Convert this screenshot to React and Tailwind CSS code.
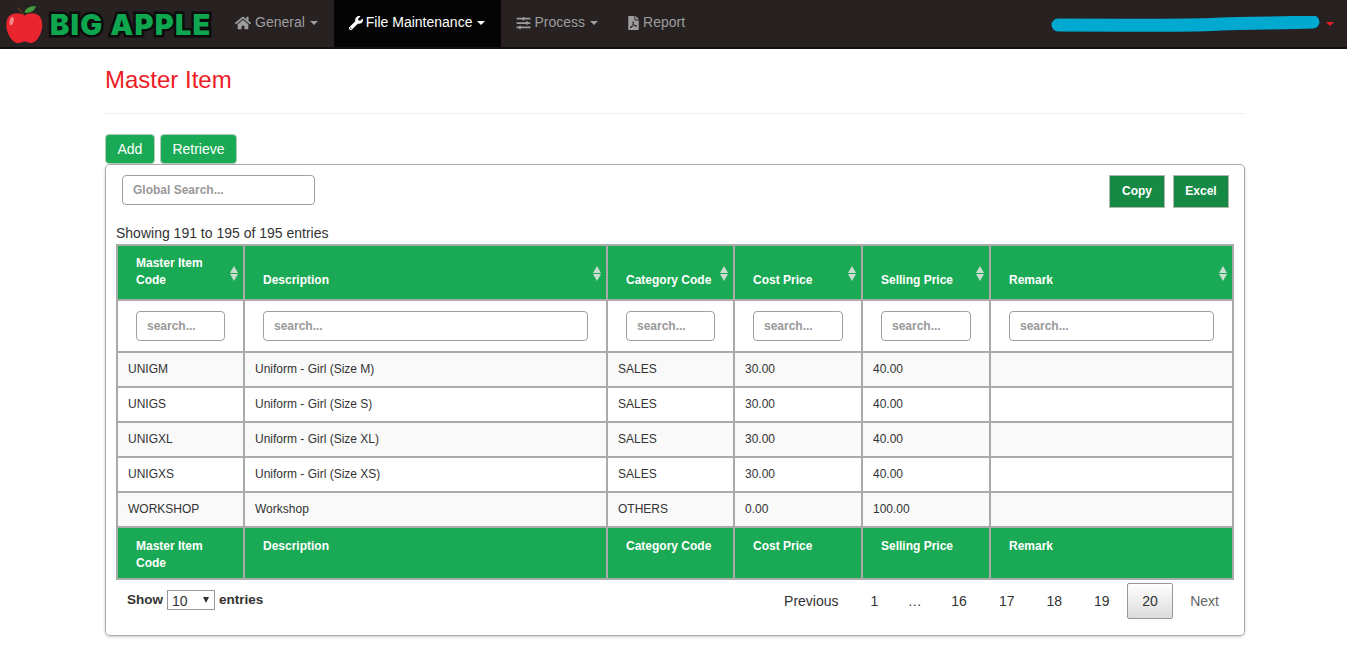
import React from 'react';
import { FaHome, FaWrench, FaSlidersH, FaFilePdf } from 'react-icons/fa';

const columns = [
  { label: 'Master Item Code', width: 'w-[127px]' },
  { label: 'Description', width: 'w-[363px]' },
  { label: 'Category Code', width: 'w-[127px]' },
  { label: 'Cost Price', width: 'w-[128px]' },
  { label: 'Selling Price', width: 'w-[128px]' },
  { label: 'Remark', width: 'w-[243px]' },
];

const rows = [
  ['UNIGM', 'Uniform - Girl (Size M)', 'SALES', '30.00', '40.00', ''],
  ['UNIGS', 'Uniform - Girl (Size S)', 'SALES', '30.00', '40.00', ''],
  ['UNIGXL', 'Uniform - Girl (Size XL)', 'SALES', '30.00', '40.00', ''],
  ['UNIGXS', 'Uniform - Girl (Size XS)', 'SALES', '30.00', '40.00', ''],
  ['WORKSHOP', 'Workshop', 'OTHERS', '0.00', '100.00', ''],
];

const Caret = ({ className = 'border-t-[#9d9d9d]' }) => (
  <span className={`ml-[5px] inline-block h-0 w-0 border-x-4 border-t-4 border-x-transparent align-middle ${className}`} />
);

const NavItem = ({ icon, label, caret, active, className = 'px-[15px]' }) => (
  <div className={`flex h-[47px] items-center pb-[2px] ${className} ${active ? 'bg-[#050505] text-white' : 'text-[#9d9d9d]'}`}>
    {icon}
    <span>{label}</span>
    {caret && <Caret className={active ? 'border-t-white' : 'border-t-[#9d9d9d]'} />}
  </div>
);

const AppleLogo = () => (
  <svg viewBox="0 0 40 42" className="h-[40px] w-[39px] shrink-0">
    <path d="M19 11 C17 8 15 6 13 4" stroke="#5b3a1e" strokeWidth="1.6" fill="none" />
    <path d="M20 9 C20 5 25 2 32 2 C31 7 26 10 20 9 Z" fill="#3f9b3c" />
    <path d="M20 12 C14 8 2 8 1 20 C0 30 7 41 13 41 C16 41 18 39.5 20 39.5 C22 39.5 24 41 27 41 C33 41 39.5 30 38.5 20 C37.5 8 26 8 20 12 Z" fill="#ea2530" />
    <ellipse cx="6.5" cy="18" rx="2" ry="4.5" fill="#f58a8e" transform="rotate(12 6.5 18)" />
  </svg>
);

const SortIcon = () => (
  <span className="absolute right-[5px] top-[20px] flex flex-col gap-[1px]">
    <span className="h-0 w-0 border-x-[4.5px] border-b-[7px] border-x-transparent border-b-[#cbdcd0]" />
    <span className="h-0 w-0 border-x-[4.5px] border-t-[7px] border-x-transparent border-t-[#cbdcd0]" />
  </span>
);

const SearchInput = ({ placeholder, className }) => (
  <input
    type="text"
    placeholder={placeholder}
    className={`h-[30px] rounded-[4px] border border-[#a0a0a0] bg-white px-[10px] text-[12px] font-bold outline-none placeholder:text-[#999] ${className}`}
  />
);

const cellBorder = 'border-2 border-[#aaaaaa]';

const App = () => {
  return (
    <div className="min-h-[648px] bg-white font-['Liberation_Sans',Arial,sans-serif] text-[14px] text-[#333]">
      <nav className="flex h-[49px] items-start border-b-2 border-[#14100f] bg-[#272122]">
        <div className="flex h-[47px] w-[220px] items-center pl-[5px]">
          <AppleLogo />
          <span className="ml-[6px] mt-[3px] whitespace-nowrap font-['Inter',sans-serif] text-[29px] font-black tracking-[1.2px] text-[#0fa650] [-webkit-text-stroke:5px_#0c0c0c] [paint-order:stroke_fill]">
            BIG APPLE
          </span>
        </div>
        <NavItem icon={<FaHome className="mr-[4px] h-[16px] w-[16px]" />} label="General" caret className="pl-[15px] pr-[16px]" />
        <NavItem icon={<FaWrench className="mr-[3px] h-[14px] w-[14px]" />} label="File Maintenance" caret active className="pl-[15px] pr-[16px]" />
        <NavItem icon={<FaSlidersH className="mr-[3px] h-[14px] w-[15px]" />} label="Process" caret />
        <NavItem icon={<FaFilePdf className="mr-[4px] h-[14px] w-[11px]" />} label="Report" />
        <div className="ml-auto flex h-[47px] items-center pr-[13px]">
          <svg viewBox="0 0 270 16" className="h-[16px] w-[270px]">
            <path d="M7 9 C90 9 150 10 170 8 C200 7 230 7 262 6" stroke="#00a9d0" strokeWidth="13" strokeLinecap="round" fill="none" />
          </svg>
          <Caret className="border-t-[#e8202a]" />
        </div>
      </nav>

      <main className="ml-[105px] w-[1140px]">
        <h1 className="mt-[16px] text-[24px] leading-[30px] text-[#ee1c25]">Master Item</h1>
        <hr className="mt-[18px] border-[#eeeeee]" />

        <div className="mt-[20px] flex gap-[5px]">
          <button className="h-[30px] rounded-[4px] border border-[#b5c9bb] bg-[#1aaa55] px-[11.5px] text-white">Add</button>
          <button className="h-[30px] rounded-[4px] border border-[#b5c9bb] bg-[#1aaa55] px-[11.5px] text-white">Retrieve</button>
        </div>

        <section className="h-[472px] rounded-[5px] border border-[#aaaaaa] px-[10px] pt-[10px] shadow-[0_1px_3px_rgba(0,0,0,0.2)]">
          <div className="flex items-start justify-between pl-[6px] pr-[5px]">
            <SearchInput placeholder="Global Search..." className="w-[193px]" />
            <div className="flex gap-[8px]">
              <button className="h-[33px] w-[56px] border border-[#a9b9ae] bg-[#168a45] pb-[2px] text-[12px] font-bold text-white">Copy</button>
              <button className="h-[33px] w-[56px] border border-[#a9b9ae] bg-[#168a45] pb-[2px] text-[12px] font-bold text-white">Excel</button>
            </div>
          </div>

          <div className="mt-[15px] leading-[21px]">Showing 191 to 195 of 195 entries</div>

          <table className="w-[1116px] table-fixed border-collapse text-[12px]">
            <thead>
              <tr className="h-[55px] bg-[#1aaa55] text-white">
                {columns.map((col) => (
                  <th key={col.label} className={`relative ${col.width} ${cellBorder} pb-[10px] pl-[18px] pr-[18px] text-left align-bottom font-bold leading-[17px]`}>
                    {col.label}
                    <SortIcon />
                  </th>
                ))}
              </tr>
              <tr className="h-[52px] bg-white">
                {columns.map((col) => (
                  <td key={col.label} className={`${cellBorder} px-[18px]`}>
                    <SearchInput placeholder="search..." className="block w-full" />
                  </td>
                ))}
              </tr>
            </thead>
            <tbody>
              {rows.map((row, i) => (
                <tr key={row[0]} className={`h-[35px] ${i % 2 === 0 ? 'bg-[#f9f9f9]' : 'bg-white'}`}>
                  {row.map((cell, j) => (
                    <td key={j} className={`${cellBorder} px-[10px] pb-[2px]`}>{cell}</td>
                  ))}
                </tr>
              ))}
            </tbody>
            <tfoot>
              <tr className="h-[52px] bg-[#1aaa55] text-white">
                {columns.map((col) => (
                  <th key={col.label} className={`${cellBorder} pl-[18px] pr-[18px] pt-[10px] text-left align-top font-bold leading-[17px]`}>
                    {col.label}
                  </th>
                ))}
              </tr>
            </tfoot>
          </table>

          <div className="flex items-start justify-between">
            <label className="ml-[11px] mt-[10px] flex items-center gap-[4px] text-[13.5px] font-bold">
              <span>Show</span>
              <span className="relative block h-[20px] w-[48px]">
                <select className="block h-[20px] w-[48px] appearance-none border border-[#999] bg-white pb-[2px] pl-[4px] text-[14px] font-normal outline-none">
                  <option>10</option>
                </select>
                <span className="pointer-events-none absolute right-[6px] top-[7px] h-0 w-0 border-x-[3.5px] border-t-[6px] border-x-transparent border-t-[#333]" />
              </span>
              <span>entries</span>
            </label>
            <div className="mt-[3px] flex items-center gap-[2px]">
              <span className="border border-transparent px-[14px] py-[7px] leading-[20px]">Previous</span>
              <span className="border border-transparent px-[14px] py-[7px] leading-[20px]">1</span>
              <span className="px-[12.5px] leading-[20px]">…</span>
              {['16', '17', '18', '19'].map((n) => (
                <span key={n} className="border border-transparent px-[14px] py-[7px] leading-[20px]">{n}</span>
              ))}
              <span className="rounded-[2px] border border-[#979797] bg-gradient-to-b from-white to-[#dcdcdc] px-[14.5px] py-[7px] leading-[20px]">20</span>
              <span className="border border-transparent px-[14px] py-[7px] leading-[20px] text-[#666]">Next</span>
            </div>
          </div>
        </section>
      </main>
    </div>
  );
};

export default App;
